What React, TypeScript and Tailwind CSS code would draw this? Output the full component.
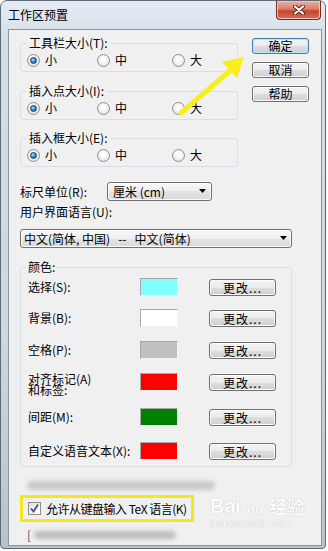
import { ReactNode } from "react";

const btnBg =
  "bg-[linear-gradient(#f3f3f3_0%,#ebebeb_50%,#dddddd_50%,#cfcfcf_100%)]";

const Radio = ({ checked }: { checked?: boolean }) => (
  <span className="relative flex h-[13px] w-[13px] items-center justify-center rounded-full border border-[#8e8f8f] bg-[radial-gradient(circle_at_50%_40%,#ffffff_20%,#d9d9d9_100%)]">
    {checked && (
      <span className="h-[7px] w-[7px] rounded-full border border-[#0f3f6e] bg-[radial-gradient(circle_at_40%_35%,#b8e4ff_0%,#3b8fd0_45%,#124d86_100%)]" />
    )}
  </span>
);

const SizeGroup = ({ label, className = "" }: { label: string; className?: string }) => (
  <fieldset className={`rounded-[3px] border border-[#d5dfe5] ${className}`}>
    <legend className="ml-[5px] px-[3px] leading-[14px]">{label}</legend>
    <div className="flex pl-[6px] pt-[3px] pb-[4px] leading-[14px]">
      <div className="flex w-[70px] items-center gap-[5px]">
        <Radio checked />
        <span>小</span>
      </div>
      <div className="flex w-[75px] items-center gap-[5px]">
        <Radio />
        <span>中</span>
      </div>
      <div className="flex items-center gap-[5px]">
        <Radio />
        <span>大</span>
      </div>
    </div>
  </fieldset>
);

const WinButton = ({
  children,
  className = "",
  isDefault,
}: {
  children: ReactNode;
  className?: string;
  isDefault?: boolean;
}) => (
  <button
    className={`flex items-center justify-center rounded-[3px] border leading-none ${btnBg} ${
      isDefault
        ? "border-[#3c7fb1] shadow-[inset_0_0_0_1px_#bde6fd]"
        : "border-[#707070] shadow-[inset_0_0_0_1px_#fbfbfb]"
    } ${className}`}
  >
    {children}
  </button>
);

const Arrow = () => (
  <svg width="8" height="5" viewBox="0 0 8 5">
    <path d="M0 0h7L3.5 4z" fill="#000" />
  </svg>
);

const Combo = ({ text, className = "" }: { text: string; className?: string }) => (
  <div
    className={`flex h-[19px] items-center justify-between rounded-[3px] border border-[#707070] bg-[linear-gradient(#f7f7f7_0%,#efefef_50%,#e3e3e3_50%,#dadada_100%)] shadow-[inset_0_0_0_1px_#fcfcfc] ${className}`}
  >
    <span className="whitespace-pre leading-none">{text}</span>
    <Arrow />
  </div>
);

const colors = [
  { label: "选择(S):", color: "bg-[#80ffff]", gap: "" },
  { label: "背景(B):", color: "bg-[#ffffff]", gap: "mt-[13px]" },
  { label: "空格(P):", color: "bg-[#c0c0c0]", gap: "mt-[14px]" },
  { label: "对齐标记(A)\n和标签:", color: "bg-[#ff0000]", gap: "mt-[14px]" },
  { label: "间距(M):", color: "bg-[#008000]", gap: "mt-[13px]" },
  { label: "自定义语音文本(X):", color: "bg-[#ff0000]", gap: "mt-[16px]" },
];

const App = () => {
  return (
    <div className="relative h-[551px] w-[328px] overflow-hidden bg-white font-['Noto_Sans_CJK_SC','Noto_Sans',sans-serif] text-[12px] text-black">
      <div className="flex h-[549px] w-[326px] flex-col rounded-t-[7px] rounded-b-[4px] border border-[#5f6a76] bg-[linear-gradient(180deg,#e4ebf3_0%,#d3dde8_8%,#cdd8e4_60%,#b7c2cf_100%)]">
        {/* title bar */}
        <div className="flex h-[28px] items-start justify-between">
          <span className="mt-[7px] ml-[7px] text-[12px] leading-[14px]">工作区预置</span>
          <div className="mr-[4px] flex h-[19px] w-[45px] items-center justify-center rounded-b-[4px] border border-t-0 border-[#7a2a20] bg-[linear-gradient(#eab1a3_0%,#d9806b_45%,#c4452d_55%,#d5705a_100%)] shadow-[inset_0_0_0_1px_#f2c2b6]">
            <svg width="12" height="10" viewBox="0 0 12 10">
              <path d="M2 1.5l8 7M10 1.5l-8 7" stroke="#5a1c14" strokeWidth="4" strokeLinecap="round" />
              <path d="M2 1.5l8 7M10 1.5l-8 7" stroke="#fff" strokeWidth="2.2" strokeLinecap="round" />
            </svg>
          </div>
        </div>

        {/* client area */}
        <div className="ml-[7px] flex h-[517px] w-[314px] flex-col border border-[#8d949c] bg-[#f0f0f0]">
          <div className="flex pl-[11px] pt-[6px]">
            <div className="flex w-[218px] flex-col">
              <SizeGroup label="工具栏大小(T):" />
              <SizeGroup label="插入点大小(I):" className="mt-[12px]" />
              <SizeGroup label="插入框大小(E):" className="mt-[11px]" />
            </div>
            <div className="mt-[2px] ml-[14px] flex flex-col gap-[8px]">
              <WinButton isDefault className="h-[16px] w-[57px]">
                确定
              </WinButton>
              <WinButton className="h-[16px] w-[57px]">取消</WinButton>
              <WinButton className="h-[16px] w-[57px]">帮助</WinButton>
            </div>
          </div>

          <div className="mt-[15px] flex items-center pl-[11px]">
            <span className="w-[87px] leading-[14px]">标尺单位(R):</span>
            <Combo text="厘米 (cm)" className="w-[105px] pl-[5px] pr-[4px]" />
          </div>

          <div className="mt-[4px] pl-[11px] leading-[14px]">用户界面语言(U):</div>
          <div className="mt-[10px] pl-[11px]">
            <Combo
              text="中文(简体, 中国)   --   中文(简体)"
              className="w-[272px] pl-[3px] pr-[3px]"
            />
          </div>

          <fieldset className="mt-[12px] ml-[11px] w-[272px] rounded-[3px] border border-[#d5dfe5]">
            <legend className="ml-[5px] px-[2px] leading-[14px]">颜色:</legend>
            <div className="flex flex-col pl-[7px] pt-[4px] pb-[6px]">
              {colors.map((c) => (
                <div key={c.label} className={`flex items-start ${c.gap}`}>
                  <span
                    className={`w-[112px] whitespace-pre ${
                      c.label.includes("\n") ? "leading-[11px]" : "leading-[18px]"
                    }`}
                  >
                    {c.label}
                  </span>
                  <span
                    className={`h-[18px] w-[38px] border border-t-[#a8a8a8] border-l-[#a8a8a8] border-r-[#f4f4f4] border-b-[#f4f4f4] ${c.color}`}
                  />
                  <WinButton className="mt-[1px] ml-[31px] h-[17px] w-[67px] tracking-[1px]">
                    更改...
                  </WinButton>
                </div>
              ))}
            </div>
          </fieldset>

          <div className="mt-[14px] ml-[18px] h-[9px] w-[188px] rounded-full bg-[#c9c9c9] blur-[2px]" />

          <div className="mt-[5px] ml-[11px] flex h-[27px] w-[174px] items-center border-[3px] border-[#f2e81a] pl-[5px]">
            <span className="flex h-[13px] w-[13px] items-center justify-center border border-[#8e8f8f] bg-[linear-gradient(135deg,#e0e0e0,#ffffff)]">
              <svg width="11" height="11" viewBox="0 0 11 11">
                <path d="M2 5.5l2.5 3L9 1.5" stroke="#3d4f8c" strokeWidth="1.8" fill="none" />
              </svg>
            </span>
            <span className="ml-[5px] whitespace-pre leading-[14px] tracking-[-0.5px]">
              允许从键盘输入 TeX 语言(K)
            </span>
          </div>

          <div className="mt-[6px] ml-[18px] flex items-center">
            <span className="leading-[14px] text-[#555555]">[</span>
            <span className="ml-[3px] h-[8px] w-[142px] rounded-full bg-[#bdbdbd] blur-[2px]" />
          </div>
        </div>
      </div>

      {/* yellow annotation arrow */}
      <svg className="pointer-events-none absolute top-0 left-0" width="328" height="551">
        <line x1="181" y1="113" x2="232" y2="69" stroke="#f7ee1c" strokeWidth="5" strokeLinecap="round" />
        <polygon points="244,57 237,78 222,62" fill="#f7ee1c" />
      </svg>

      {/* watermark */}
      <div className="pointer-events-none absolute top-[494px] left-[210px] flex flex-col items-start text-white opacity-90">
        <div className="flex items-center font-['Liberation_Sans',sans-serif] text-[20px] leading-[24px] font-bold [text-shadow:0_0_1px_#9a9a9a]">
          <span>Bai</span>
          <span className="mx-[2px] flex h-[22px] w-[24px] items-end justify-center rounded-full text-[13px] leading-[14px]">du</span>
          <span className="font-['Noto_Sans_CJK_SC',sans-serif] text-[18px]">经验</span>
        </div>
        <span className="font-['Liberation_Sans',sans-serif] text-[10px] leading-[12px] [text-shadow:0_0_1px_#a0a0a0]">
          jingyan.baidu.com
        </span>
      </div>
    </div>
  );
};

export default App;
